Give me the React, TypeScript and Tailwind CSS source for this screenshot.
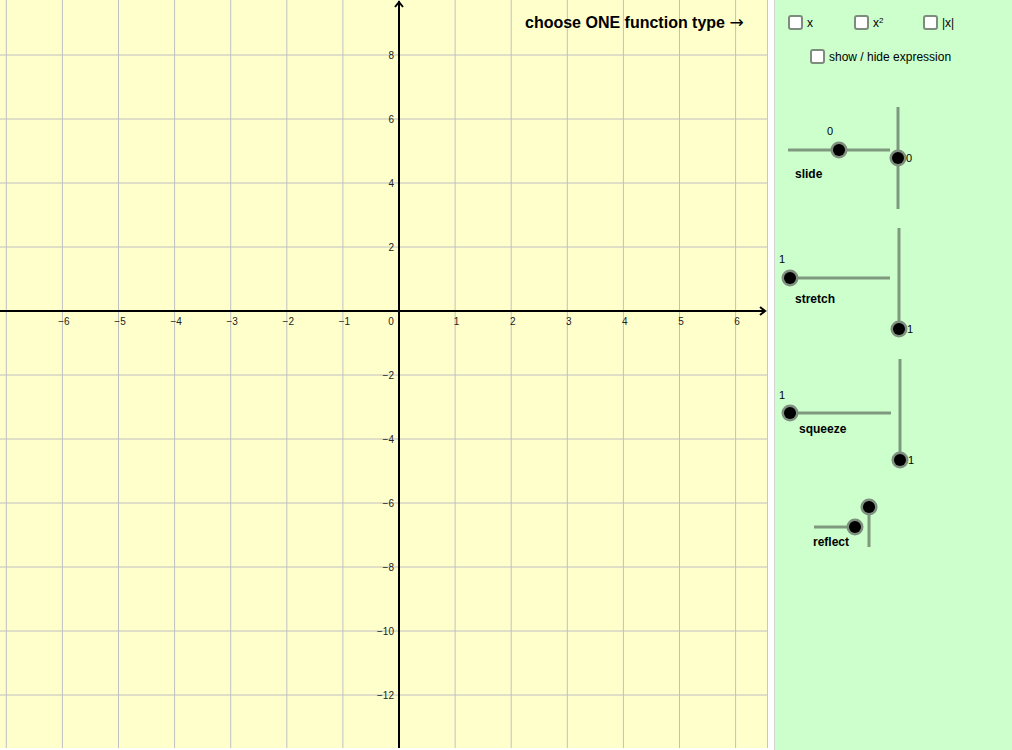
import React from "react";

const X0 = 399;
const Y0 = 311;
const UX = 56.1;
const UY = 32;

const xTicks = [-7, -6, -5, -4, -3, -2, -1, 1, 2, 3, 4, 5, 6];
const yTicks = [8, 6, 4, 2, -2, -4, -6, -8, -10, -12];

function fmt(n: number) {
  return n < 0 ? `\u2212${-n}` : String(n);
}

function Graph() {
  return (
    <svg width={767} height={748} className="block" style={{ fontFamily: '"Liberation Sans", Arial, sans-serif' }}>
      {/* grid */}
      {xTicks.concat([0]).map((k) => (
        <line key={`gx${k}`} x1={X0 + k * UX} y1={0} x2={X0 + k * UX} y2={748} stroke="#c0c0c4" strokeWidth={1} />
      ))}
      {[-14, -12, -10, -8, -6, -4, -2, 0, 2, 4, 6, 8].map((k) => (
        <line key={`gy${k}`} x1={0} y1={Y0 - k * UY} x2={767} y2={Y0 - k * UY} stroke="#c0c0c4" strokeWidth={1} />
      ))}

      {/* axes */}
      <line x1={0} y1={Y0} x2={765} y2={Y0} stroke="#000" strokeWidth={2} />
      <line x1={X0} y1={1} x2={X0} y2={748} stroke="#000" strokeWidth={2} />
      <polyline points={`${X0 - 4},7 ${X0},2 ${X0 + 4},7`} fill="none" stroke="#000" strokeWidth={2} />
      <polyline points={`760,307 765,${Y0} 760,315`} fill="none" stroke="#000" strokeWidth={2} />

      {/* labels */}
      {xTicks.filter((k) => k !== -7).map((k) => (
        <text key={`lx${k}`} x={X0 + k * UX + 1.5} y={325} fontSize={10} textAnchor="middle" fill="#222">
          {fmt(k)}
        </text>
      ))}
      <text x={391} y={325} fontSize={10} textAnchor="middle" fill="#222">0</text>
      {yTicks.map((k) => (
        <text key={`ly${k}`} x={394} y={Y0 - k * UY + 3.5} fontSize={10} textAnchor="end" fill="#222">
          {fmt(k)}
        </text>
      ))}

      <text x={525} y={28} fontSize={16} fontWeight="bold" fill="#000">
        choose ONE function type{" "}
        <tspan fontFamily='"DejaVu Sans", sans-serif' fontWeight="normal" fontSize={17}>→</tspan>
      </text>
    </svg>
  );
}

function Box({ label }: { label: React.ReactNode }) {
  return (
    <label className="flex items-center gap-[4px] text-[12px] leading-none text-black">
      <span className="block w-[15px] h-[15px] rounded-[3px] border-2 border-[#7d8c7d] bg-white" />
      <span>{label}</span>
    </label>
  );
}

function Pt({ x, y }: { x: number; y: number }) {
  return (
    <g>
      <circle cx={x} cy={y} r={8.5} fill="#7f8f7f" />
      <circle cx={x} cy={y} r={6} fill="#000" />
    </g>
  );
}

const LINE = "#7f997f";

function Sliders() {
  return (
    <svg
      width={237}
      height={480}
      viewBox="775 90 237 480"
      className="block"
      style={{ fontFamily: '"Liberation Sans", Arial, sans-serif' }}
    >
      {/* slide */}
      <line x1={788} y1={150} x2={890} y2={150} stroke={LINE} strokeWidth={3} />
      <line x1={898} y1={107} x2={898} y2={209} stroke={LINE} strokeWidth={3} />
      <Pt x={839} y={150} />
      <Pt x={898} y={158} />
      <text x={827} y={135} fontSize={11} fill="#000">0</text>
      <text x={906} y={162} fontSize={11} fill="#000">0</text>
      <text x={795} y={178} fontSize={12} fontWeight="bold" fill="#000">slide</text>

      {/* stretch */}
      <line x1={790} y1={278} x2={890} y2={278} stroke={LINE} strokeWidth={3} />
      <line x1={899} y1={228} x2={899} y2={329} stroke={LINE} strokeWidth={3} />
      <Pt x={790} y={278} />
      <Pt x={899} y={329} />
      <text x={779} y={263} fontSize={11} fill="#000">1</text>
      <text x={907} y={333} fontSize={11} fill="#000">1</text>
      <text x={795} y={303} fontSize={12} fontWeight="bold" fill="#000">stretch</text>

      {/* squeeze */}
      <line x1={790} y1={413} x2={891} y2={413} stroke={LINE} strokeWidth={3} />
      <line x1={900} y1={359} x2={900} y2={460} stroke={LINE} strokeWidth={3} />
      <Pt x={790} y={413} />
      <Pt x={900} y={460} />
      <text x={779} y={399} fontSize={11} fill="#000">1</text>
      <text x={908} y={464} fontSize={11} fill="#000">1</text>
      <text x={799} y={433} fontSize={12} fontWeight="bold" fill="#000">squeeze</text>

      {/* reflect */}
      <line x1={814} y1={527} x2={855} y2={527} stroke={LINE} strokeWidth={3} />
      <line x1={869} y1={507} x2={869} y2={547} stroke={LINE} strokeWidth={3} />
      <Pt x={855} y={527} />
      <Pt x={869} y={507} />
      <text x={813} y={546} fontSize={12} fontWeight="bold" fill="#000">reflect</text>
    </svg>
  );
}

export default function App() {
  return (
    <div className="flex w-[1012px] h-[750px] bg-white overflow-hidden" style={{ fontFamily: '"Liberation Sans", Arial, sans-serif' }}>
      <div className="w-[768px] h-[748px] bg-[#ffffcc] border-r border-[#c6c6c6] shrink-0">
        <Graph />
      </div>
      <div className="w-[6px] shrink-0" />
      <div className="w-[238px] h-[750px] bg-[#ccffcc] border-l border-[#d4d4d4] shrink-0 flex flex-col">
        <div className="flex pt-[15px] pl-[13px]">
          <div className="w-[66px]"><Box label="x" /></div>
          <div className="w-[69px]"><Box label={<span>x<sup className="text-[8px]">2</sup></span>} /></div>
          <div><Box label="|x|" /></div>
        </div>
        <div className="pt-[19px] pl-[35px]">
          <Box label="show / hide expression" />
        </div>
        <div className="mt-[26px]">
          <Sliders />
        </div>
      </div>
    </div>
  );
}
